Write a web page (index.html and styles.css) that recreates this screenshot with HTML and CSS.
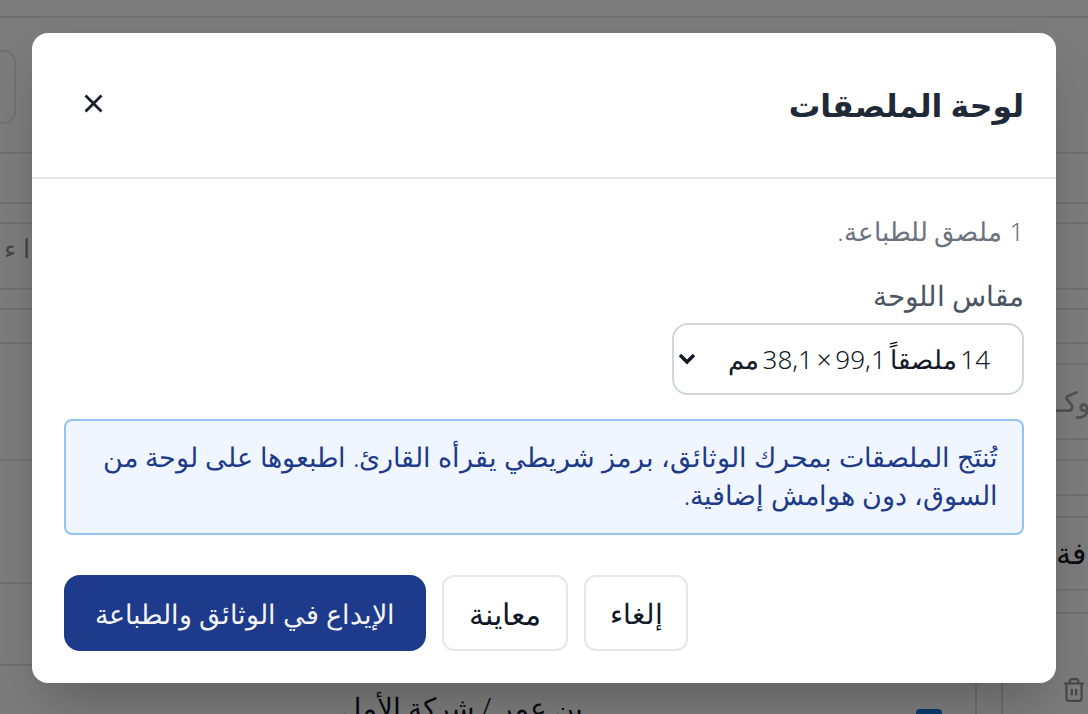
FILE: index.html
```html
<!DOCTYPE html>
<html lang="ar">
<head>
  <meta charset="UTF-8">
  <title>لوحة الملصقات</title>
  <link rel="stylesheet" href="styles.css">
</head>
<body>
  <!-- page behind the dialog, only its edges show -->
  <div class="page">
    <div class="row r18"></div>
    <div class="row r136"><div class="search-box"></div></div>
    <div class="row r50"></div>
    <div class="row r20"></div>
    <div class="row r66"><span class="input-left">ا ء</span></div>
    <div class="row r20"></div>
    <div class="row r34"></div>
    <div class="split">
      <div class="strip">
        <div class="row r117"></div>
        <div class="row r123"></div>
        <div class="row r82"></div>
      </div>
      <div class="strip">
        <div class="row r21"></div>
        <div class="row r75"><span class="input-right">ـوكـ</span></div>
        <div class="row r21"></div>
        <div class="row r35"></div>
        <div class="row r22"></div>
        <div class="row r73"><span class="cell-right">فة</span></div>
        <div class="row r23"></div>
      </div>
    </div>
    <div class="table-row">
      <div class="cell name">بن عمر / شركة الأمل</div>
      <div class="cell"><span class="checkbox"></span></div>
      <div class="cell line"></div>
      <div class="cell line trash">
        <svg width="26" height="26" viewBox="0 0 24 24">
          <path d="M3 6h18M19 6v14c0 1-1 2-2 2H7c-1 0-2-1-2-2V6M8 6V4c0-1 1-2 2-2h4c1 0 2 1 2 2v2M10 11v6M14 11v6" />
        </svg>
      </div>
    </div>
  </div>

  <div class="overlay"></div>

  <div class="modal">
    <div class="modal-head">
      <h2>لوحة الملصقات</h2>
      <button class="close">
        <svg width="19" height="19" viewBox="0 0 19 19"><path d="M1.5 1.5 17.5 17.5M17.5 1.5 1.5 17.5" /></svg>
      </button>
    </div>
    <div class="modal-body">
      <p class="count">1 ملصق للطباعة.</p>
      <label class="field-label">مقاس اللوحة</label>
      <div class="select">
        <span>14 ملصقاً 99,1 × 38,1 مم</span>
        <svg width="18" height="12" viewBox="0 0 18 12"><path d="M2 2 9 9 16 2" /></svg>
      </div>
      <div class="note">تُنتَج الملصقات بمحرك الوثائق، برمز شريطي يقرأه القارئ. اطبعوها على لوحة من<br>السوق، دون هوامش إضافية.</div>
      <div class="actions">
        <button class="btn cancel">إلغاء</button>
        <button class="btn preview">معاينة</button>
        <button class="btn primary">الإيداع في الوثائق والطباعة</button>
      </div>
    </div>
  </div>
</body>
</html>
```

FILE: styles.css
```css
* {
  box-sizing: border-box;
}
html, body {
  height: 100%;
}
body {
  margin: 0;
  position: relative;
  background: #f8f8f8;
  font-family: "Noto Sans", "DejaVu Sans", sans-serif;
  font-weight: 300;
  overflow: hidden;
}

/* background page */
.row {
  border-bottom: 2px solid #e2e2e2;
  position: relative;
  overflow: hidden;
}
.r18 { height: 18px; }
.r20 { height: 20px; }
.r21 { height: 21px; }
.r22 { height: 22px; }
.r23 { height: 23px; }
.r34 { height: 34px; }
.r35 { height: 35px; }
.r50 { height: 50px; }
.r66 { height: 66px; }
.r73 { height: 73px; }
.r75 { height: 75px; }
.r82 { height: 82px; }
.r117 { height: 117px; }
.r123 { height: 123px; }
.r136 { height: 136px; }
.search-box {
  width: 40px;
  height: 74px;
  margin: 32px 0 0 -24px;
  border: 2px solid #e2e2e2;
  border-radius: 12px;
}
.input-left {
  display: block;
  padding: 6px 0 0 4px;
  font-size: 26px;
  color: #8a8a8a;
  white-space: nowrap;
}
.split {
  display: flex;
  justify-content: space-between;
  height: 322px;
}
.strip {
  width: 32px;
}
.input-right {
  display: block;
  padding-top: 17px;
  font-size: 28px;
  color: #a0a0a0;
  white-space: nowrap;
}
.cell-right {
  display: block;
  padding-top: 14px;
  font-size: 30px;
  color: #111827;
  white-space: nowrap;
}
.table-row {
  display: grid;
  grid-template-columns: 916px 59px 26px 87px;
  height: 48px;
  overflow: hidden;
}
.name {
  padding: 22px 0 0 341px;
  font-size: 28px;
  color: #111827;
  white-space: nowrap;
}
.checkbox {
  display: block;
  width: 26px;
  height: 26px;
  margin-top: 43px;
  background: #1a73d8;
  border-radius: 4px;
}
.line {
  border-left: 2px solid #d8d8d8;
}
.trash {
  padding: 11px 0 0 58px;
}
.trash path {
  stroke: #8e8e8e;
  stroke-width: 2;
  fill: none;
}
.overlay {
  position: absolute;
  inset: 0;
  background: rgba(0,0,0,0.5);
}

/* dialog */
.modal {
  position: absolute;
  left: 32px;
  top: 33px;
  width: 1024px;
  height: 650px;
  direction: rtl;
  background: #fff;
  border-radius: 16px;
  box-shadow: 0 25px 50px -12px rgba(0,0,0,0.25);
}
.modal-head {
  height: 146px;
  border-bottom: 2px solid #e5e7eb;
  padding: 0 32px 4px 52px;
  display: flex;
  align-items: center;
  justify-content: space-between;
}
.modal-head h2 {
  margin: 2px 0 0;
  font-size: 31.5px;
  font-weight: 600;
  color: #1f2937;
}
.close {
  background: none;
  border: none;
  padding: 0;
  display: flex;
}
.close path {
  stroke: #1a1f2e;
  stroke-width: 2.8;
  fill: none;
}
.modal-body {
  padding: 32px;
}
.count {
  margin: 0 0 28px;
  font-size: 26px;
  line-height: 40px;
  height: 40px;
  color: #6b7280;
}
.field-label {
  display: block;
  font-size: 28px;
  line-height: 32px;
  color: #4b5563;
  margin-bottom: 12px;
}
.select {
  width: 352px;
  height: 72px;
  border: 2px solid #d1d5db;
  border-radius: 16px;
  padding: 0 32px 0 4px;
  display: flex;
  align-items: center;
  justify-content: space-between;
  font-size: 26px;
  word-spacing: -3px;
  color: #111827;
}
.select path {
  stroke: #111827;
  stroke-width: 3.4;
  fill: none;
}
.note {
  margin-top: 24px;
  background: #eff6ff;
  border: 2px solid #93c5ee;
  border-radius: 8px;
  padding: 17px 24px 0;
  font-size: 26.7px;
  line-height: 38px;
  color: #1e3a8a;
  height: 116px;
  white-space: nowrap;
}
.actions {
  display: flex;
  justify-content: flex-end;
  gap: 16px;
  margin-top: 40px;
}
.btn {
  height: 76px;
  padding: 0;
  background: #fff;
  border: 2px solid #e5e7eb;
  border-radius: 12px;
  font: inherit;
  font-size: 28px;
  color: #111827;
}
.cancel { width: 104px; }
.preview { width: 126px; font-size: 30px; }
.primary {
  width: 362px;
  font-size: 27px;
  background: #1e3a8a;
  border-color: #1e3a8a;
  border-radius: 16px;
  color: #f3f4f6;
}
```
